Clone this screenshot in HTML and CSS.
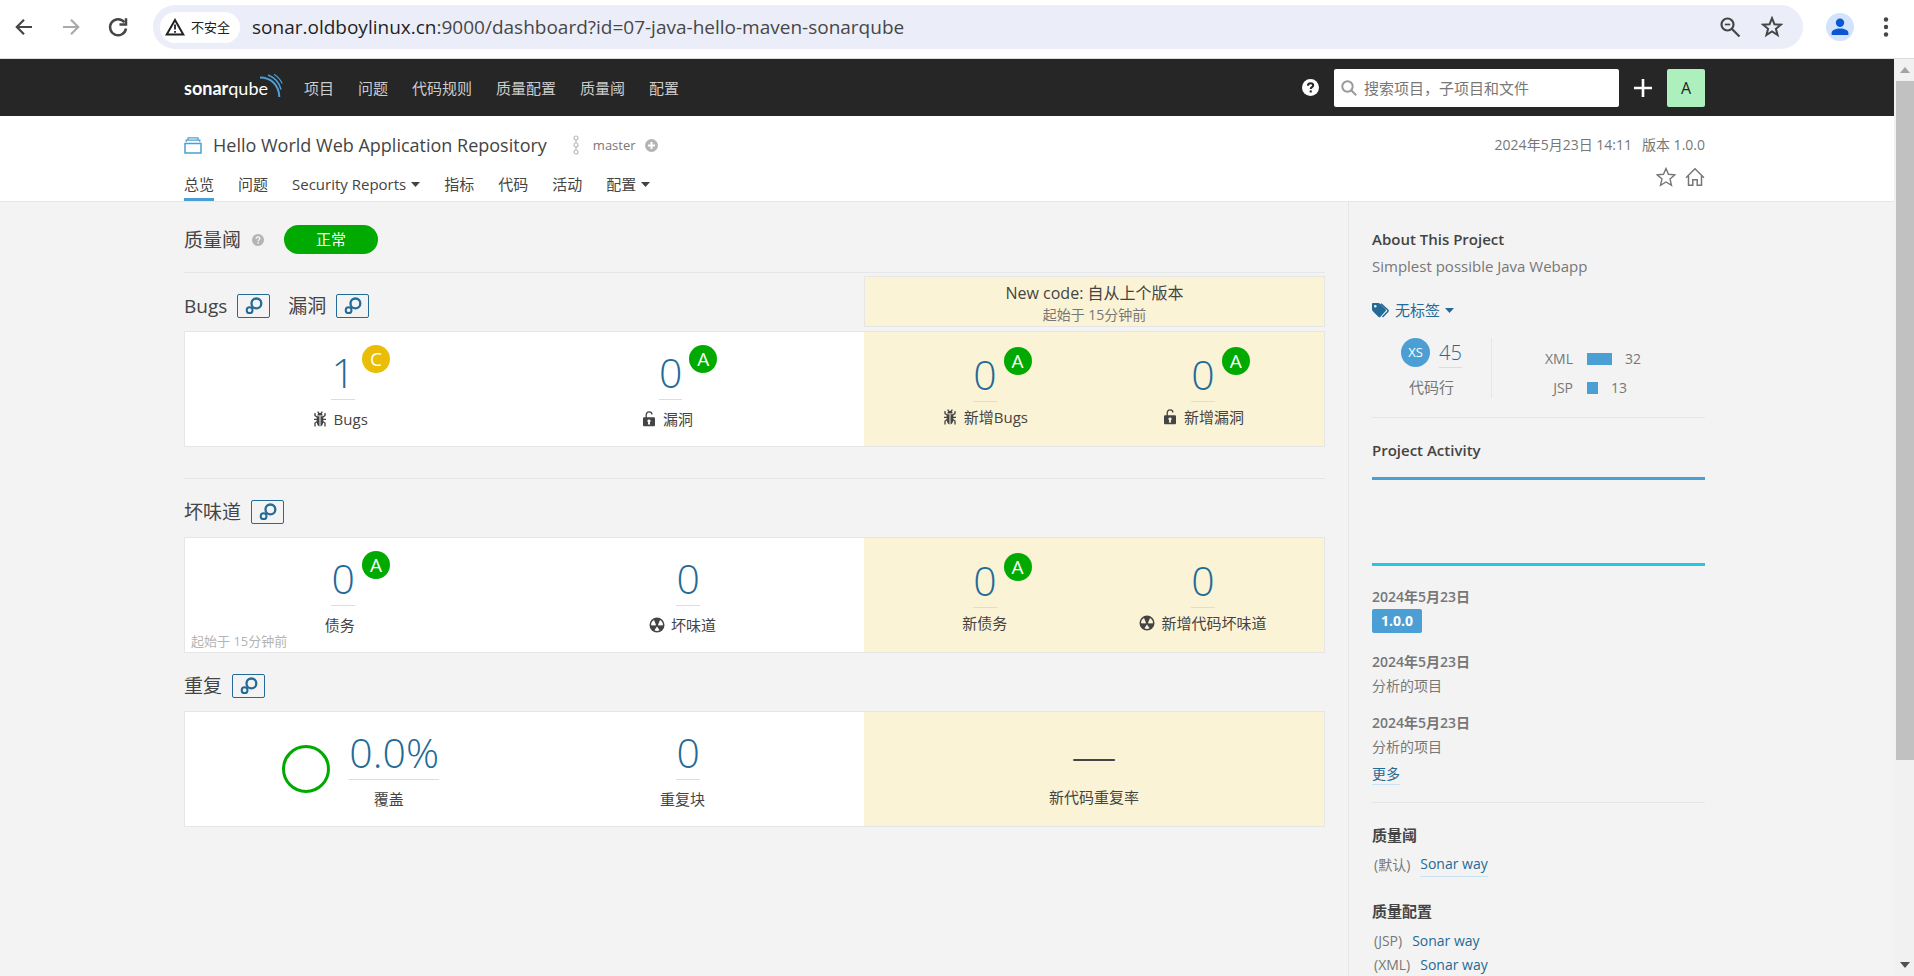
FILE: index.html
```html
<!DOCTYPE html>
<html lang="zh-CN">
<head>
<meta charset="utf-8">
<title>Hello World Web Application Repository</title>
<link rel="stylesheet" href="styles.css">
</head>
<body>
<svg class="sprite" aria-hidden="true">
  <symbol id="i-link" viewBox="0 0 18 18"><g fill="none" stroke="currentColor"><circle cx="11.4" cy="6.4" r="4.900" stroke-width="2.300"/><circle cx="4.600" cy="13.200" r="2.900" stroke-width="2"/></g></symbol>
  <symbol id="i-bug" viewBox="0 0 16 16"><g fill="none" stroke="currentColor" stroke-width="1.300"><path d="M5.700.5 6.900 2.600M10.300.5 9.100 2.600M3 2V4.600L5.200 6M13 2V4.600L10.800 6M2 8.300H5M14 8.300H11M5.200 10.500 3 12v3.400M10.800 10.500 13 12v3.400"/></g><path fill="currentColor" d="M5.400 4.600C5.400 2.800 6.400 1.800 8 1.800s2.600 1 2.600 2.800zM4.700 5.200h2.800v10.200C5.400 15.200 4.700 12.600 4.700 10zM8.500 5.200h2.800V10c0 2.600-.7 5.200-2.800 5.400z"/></symbol>
  <symbol id="i-lock" viewBox="0 0 16 16"><path d="M5.200 7V4C5.200 2 6.400.9 8 .9s2.900 1 2.900 2.500" fill="none" stroke="currentColor" stroke-width="1.300"/><path fill="currentColor" fill-rule="evenodd" d="M3.300 6.200h9.400c.8 0 1.300.5 1.300 1.300V14c0 .8-.5 1.300-1.300 1.300H3.300C2.500 15.300 2 14.800 2 14V7.500c0-.8.5-1.300 1.300-1.300zM8 8.400a1.600 1.600 0 0 0-.8 3L6.800 13.400h2.400l-.4-2A1.600 1.600 0 0 0 8 8.400z"/></symbol>
  <symbol id="i-smell" viewBox="0 0 16 16"><circle cx="8" cy="8" r="7.500" fill="currentColor"/><g fill="var(--hole)"><path d="M6.900 7.400 5 3A6 6 0 0 0 2 8.200l4.500.2zM9.100 7.400 11 3a6 6 0 0 1 3 5.200l-4.500.2zM8 9.600 5.400 13.300a6 6 0 0 0 5.200 0z"/></g></symbol>
  <symbol id="i-help" viewBox="0 0 16 16"><circle cx="8" cy="8" r="8" fill="currentColor"/><path d="M5.600 6.300C5.600 4.700 6.600 3.900 8 3.900s2.500.8 2.500 2.100C10.500 7.700 8.200 7.700 8.200 9.500" fill="none" stroke="var(--cut)" stroke-width="1.900"/><rect x="7.200" y="10.700" width="2" height="2" fill="var(--cut)"/></symbol>
  <symbol id="i-caret" viewBox="0 0 9 5"><path d="M0 0h9L4.500 5z" fill="currentColor"/></symbol>
</svg>

<header class="toolbar">
  <button class="tool" aria-label="后退"><svg width="24" height="24" viewBox="0 0 24 24" fill="none" stroke="#444746" stroke-width="2.200"><path d="M20 12H5M12 4.800 4.800 12l7.200 7.200"/></svg></button>
  <button class="tool" aria-label="前进"><svg width="24" height="24" viewBox="0 0 24 24" fill="none" stroke="#a8aaac" stroke-width="2.200"><path d="M4 12h15M12 4.800 19.200 12 12 19.200"/></svg></button>
  <button class="tool" aria-label="刷新"><svg width="24" height="24" viewBox="0 0 24 24" fill="none" stroke="#444746" stroke-width="2.500"><path d="M18.400 7.300A8 8 0 1 0 20 13.500"/><path d="M20 3.300V9.500H13.500"/></svg></button>
  <div class="omnibox">
    <button class="chip"><svg width="20" height="18" viewBox="0 0 20 18"><path d="M10 2 18.300 16.500H1.700z" fill="none" stroke="#202124" stroke-width="2"/><path d="M10 6.500v5M10 13v1.800" stroke="#202124" stroke-width="1.800"/></svg>不安全</button>
    <p class="url"><span class="host">sonar.oldboylinux.cn</span>:9000/dashboard?id=07-java-hello-maven-sonarqube</p>
    <button class="tool" aria-label="缩放"><svg width="22" height="22" viewBox="0 0 22 22" fill="none" stroke="#444746" stroke-width="2.200"><circle cx="8.500" cy="8.500" r="6"/><path d="m13 13 7.500 7.500"/><path d="M5.800 8.500h5.400" stroke-width="1.700"/></svg></button>
    <button class="tool" aria-label="为此页添加书签"><svg width="22" height="22" viewBox="0 0 22 22" fill="none" stroke="#444746" stroke-width="2"><path d="m11 2.200 2.400 6 6.500.5-5 4.100 1.700 6.200L11 15.500 5.400 19l1.700-6.200-5-4.100 6.500-.5z"/></svg></button>
  </div>
  <button class="tool" aria-label="个人资料"><svg width="28" height="28" viewBox="0 0 28 28"><circle cx="14" cy="14" r="14" fill="#d3e3fd"/><circle cx="14" cy="9.700" r="4.200" fill="#0b57d0"/><path d="M5.600 22v-2c0-3 4-4.600 8.400-4.600s8.400 1.600 8.400 4.600v2z" fill="#0b57d0"/></svg></button>
  <button class="tool menu" aria-label="菜单"><svg width="6" height="22" viewBox="0 0 6 22" fill="#444746"><circle cx="3" cy="3.500" r="2.200"/><circle cx="3" cy="11" r="2.200"/><circle cx="3" cy="18.500" r="2.200"/></svg></button>
</header>

<div class="viewport">
<div class="page">
  <nav class="global">
    <a class="logo" href="#" aria-label="sonarqube"><span class="word"><b>sonar</b>qube</span><svg width="24" height="26" viewBox="0 0 24 26" fill="none" stroke="#4b9fd5"><path d="M1 4.500C12 4.500 20 12 20.300 24" stroke-width="2"/><path d="M9 2C15.500 4.500 20.500 10 22 16.500" stroke-width="1.500"/><path d="M15 1.200C18.500 3.500 21.500 6.500 23.200 10.500" stroke-width="1.100"/></svg></a>
    <a href="#">项目</a><a href="#">问题</a><a href="#">代码规则</a><a href="#">质量配置</a><a href="#">质量阈</a><a href="#">配置</a>
    <div class="global-right">
      <button class="plain on-dark" aria-label="帮助"><svg width="17" height="17"><use href="#i-help"/></svg></button>
      <label class="search"><svg width="16" height="16" viewBox="0 0 16 16" fill="none" stroke="#999" stroke-width="2"><circle cx="6.500" cy="6.500" r="5.200"/><path d="m10.200 10.200 5 5"/></svg><input type="text" placeholder="搜索项目，子项目和文件" aria-label="搜索"></label>
      <button class="plain" aria-label="新建"><svg width="18" height="18" viewBox="0 0 18 18"><path d="M9 0v18M0 9h18" stroke="#fff" stroke-width="2.600"/></svg></button>
      <button class="avatar">A</button>
    </div>
  </nav>

  <header class="project">
    <div class="project-top">
      <svg class="project-icon" width="18" height="17" viewBox="0 0 18 17" fill="none" stroke="#4b9fd5"><rect x="1" y="6.500" width="16" height="9.500" stroke-width="1.500"/><path d="M2.200 5V3.200h13.600V5M4 3V.9h10V3" stroke-width="1.200"/></svg>
      <h1>Hello World Web Application Repository</h1>
      <svg class="branch-icon" width="6" height="20" viewBox="0 0 6 20" fill="none" stroke="#bbb" stroke-width="1.200"><circle cx="3" cy="3" r="2"/><circle cx="3" cy="10" r="2"/><circle cx="3" cy="17" r="2"/><path d="M3 5v3M3 12v3"/></svg>
      <span class="branch">master</span>
      <button class="plain" aria-label="添加分支"><svg width="13" height="13" viewBox="0 0 13 13"><circle cx="6.500" cy="6.500" r="6.500" fill="#b4b4b4"/><path d="M6.500 3v7M3 6.500h7" stroke="#fff" stroke-width="2"/></svg></button>
      <p class="meta"><time>2024年5月23日 14:11</time><span>版本 1.0.0</span></p>
    </div>
    <div class="project-bottom">
      <nav class="tabs"><a class="active" href="#">总览</a><a href="#">问题</a><a href="#">Security Reports<svg width="9" height="5"><use href="#i-caret"/></svg></a><a href="#">指标</a><a href="#">代码</a><a href="#">活动</a><a href="#">配置<svg width="9" height="5"><use href="#i-caret"/></svg></a></nav>
      <div class="marks">
        <button class="plain" aria-label="收藏"><svg width="20" height="20" viewBox="0 0 20 20" fill="none" stroke="#777" stroke-width="1.400"><path d="m10 1.500 2.500 5.800 6.300.6-4.800 4.100 1.500 6.300-5.500-3.300-5.500 3.300L6 12 1.200 7.900l6.300-.6z"/></svg></button>
        <button class="plain" aria-label="设为首页"><svg width="20" height="20" viewBox="0 0 20 20" fill="none" stroke="#777" stroke-width="1.500"><path d="M1 10.700 10 1.700l9 9M3.500 9v9.300h4.300v-5.500h4.400v5.500h4.300V9"/></svg></button>
      </div>
    </div>
  </header>

  <div class="content">
    <main>
      <div class="gate"><h2>质量阈</h2><svg class="hint" width="12" height="12"><use href="#i-help"/></svg><span class="level">正常</span></div>

      <section>
        <div class="head split">
          <div class="titles"><h2>Bugs</h2><button class="jump" aria-label="Bugs"><svg width="18" height="18"><use href="#i-link"/></svg></button><h2 class="next">漏洞</h2><button class="jump" aria-label="漏洞"><svg width="18" height="18"><use href="#i-link"/></svg></button></div>
          <div class="leak-head"><p>New code: 自从上个版本</p><small>起始于 15分钟前</small></div>
        </div>
        <div class="card split">
          <div class="overall">
            <div class="measure rated"><div class="value"><a href="#">1</a><span class="rating c">C</span></div><p class="label"><svg width="16" height="16"><use href="#i-bug"/></svg>Bugs</p></div>
            <div class="measure rated"><div class="value"><a href="#">0</a><span class="rating">A</span></div><p class="label"><svg width="16" height="16"><use href="#i-lock"/></svg>漏洞</p></div>
          </div>
          <div class="leak">
            <div class="measure"><div class="value"><a href="#">0</a><span class="rating">A</span></div><p class="label"><svg width="16" height="16"><use href="#i-bug"/></svg>新增Bugs</p></div>
            <div class="measure"><div class="value"><a href="#">0</a><span class="rating">A</span></div><p class="label"><svg width="16" height="16"><use href="#i-lock"/></svg>新增漏洞</p></div>
          </div>
        </div>
      </section>

      <section class="ruled">
        <div class="head titles"><h2>坏味道</h2><button class="jump" aria-label="坏味道"><svg width="18" height="18"><use href="#i-link"/></svg></button></div>
        <div class="card split">
          <div class="overall">
            <div class="measure rated"><div class="value"><a href="#">0</a><span class="rating">A</span></div><p class="label">债务</p></div>
            <div class="measure"><div class="value"><a href="#">0</a></div><p class="label"><svg width="16" height="16"><use href="#i-smell"/></svg>坏味道</p></div>
            <small class="since">起始于 15分钟前</small>
          </div>
          <div class="leak">
            <div class="measure"><div class="value"><a href="#">0</a><span class="rating">A</span></div><p class="label">新债务</p></div>
            <div class="measure"><div class="value"><a href="#">0</a></div><p class="label"><svg width="16" height="16"><use href="#i-smell"/></svg>新增代码坏味道</p></div>
          </div>
        </div>
      </section>

      <section class="follow">
        <div class="head titles"><h2>重复</h2><button class="jump" aria-label="重复"><svg width="18" height="18"><use href="#i-link"/></svg></button></div>
        <div class="card split">
          <div class="overall">
            <div class="with-ring"><span class="ring"></span><div class="measure"><div class="value"><a href="#">0.0%</a></div><p class="label">覆盖</p></div></div>
            <div class="measure"><div class="value"><a href="#">0</a></div><p class="label">重复块</p></div>
          </div>
          <div class="leak single">
            <div class="measure"><div class="value"><span class="none">—</span></div><p class="label">新代码重复率</p></div>
          </div>
        </div>
      </section>
    </main>

    <aside>
      <section class="about">
        <h3>About This Project</h3>
        <p class="desc">Simplest possible Java Webapp</p>
        <button class="tags"><svg width="18" height="15" viewBox="0 0 18 15"><path fill="currentColor" fill-rule="evenodd" d="M0 1.300C0 .5.5 0 1.300 0h4.900c.7 0 1.400.3 1.900.8l5.500 5.500c.5.500.5 1.200 0 1.700l-5.300 5.900c-.5.500-1.200.5-1.700 0L.8 8.200C.3 7.700 0 7 0 6.300zM3.300 1.900a1.300 1.300 0 1 0 0 2.600 1.300 1.300 0 0 0 0-2.600z"/><path d="M9 .7 15.800 7c.5.500.5.900 0 1.400L10.500 14" fill="none" stroke="currentColor" stroke-width="1.500"/></svg>无标签<svg width="9" height="5"><use href="#i-caret"/></svg></button>
        <div class="size">
          <div class="loc"><div class="loc-value"><span class="size-rating">XS</span><a href="#">45</a></div><p>代码行</p></div>
          <dl class="langs">
            <div><dt>XML</dt><dd><span class="bar" style="width:25px"></span>32</dd></div>
            <div><dt>JSP</dt><dd><span class="bar" style="width:11px"></span>13</dd></div>
          </dl>
        </div>
      </section>
      <section class="activity">
        <h3>Project Activity</h3>
        <div class="graph"></div>
        <ul>
          <li class="release"><time>2024年5月23日</time><span class="version">1.0.0</span></li>
          <li><time>2024年5月23日</time><p>分析的项目</p></li>
          <li><time>2024年5月23日</time><p>分析的项目</p></li>
        </ul>
        <a class="more" href="#">更多</a>
      </section>
      <section class="profiles">
        <h3>质量阈</h3>
        <p class="single-profile"><span>(默认)</span><a class="lined" href="#">Sonar way</a></p>
        <h3>质量配置</h3>
        <p><span>(JSP)</span><a href="#">Sonar way</a></p>
        <p><span>(XML)</span><a href="#">Sonar way</a></p>
      </section>
    </aside>
  </div>
</div>
<div class="scrollbar" aria-hidden="true">
  <svg width="10" height="6" viewBox="0 0 10 6"><path d="M0 6h10L5 0z" fill="#a3a3a3"/></svg>
  <div class="thumb"></div>
  <svg width="10" height="6" viewBox="0 0 10 6"><path d="M0 0h10L5 6z" fill="#505050"/></svg>
</div>
</div>
</body>
</html>
```
FILE: styles.css
```css
:root {
  --blue: #4b9fd5;
  --link: #236a97;
  --line: #e6e6e6;
  --text: #444;
  --muted: #777;
  --cut: #f3f3f3;
  --hole: #fff;
}

* { box-sizing: border-box; }
h1, h2, h3, p, ul, dl, dd { margin: 0; padding: 0; font-weight: 400; }
ul { list-style: none; }
a { color: inherit; text-decoration: none; }
svg { flex: none; display: block; }
.sprite { position: absolute; width: 0; height: 0; }

body {
  margin: 0;
  height: 100vh;
  overflow: hidden;
  display: flex;
  flex-direction: column;
  color: var(--text);
  background: #f3f3f3;
  font: 15px/24px "Open Sans", "Noto Sans CJK SC", sans-serif;
}

button {
  border: 0;
  padding: 0;
  margin: 0;
  background: none;
  color: inherit;
  font: inherit;
  cursor: pointer;
}
.plain, .tool { display: flex; }

/* browser toolbar */
.toolbar {
  flex: none;
  display: flex;
  align-items: center;
  gap: 23px;
  padding: 5px 25px 9px 12px;
  background: #fff;
  border-bottom: 1px solid #dcdcdc;
}
.omnibox {
  flex: 1;
  display: flex;
  align-items: center;
  gap: 20px;
  height: 44px;
  padding: 0 20px 0 7px;
  border-radius: 22px;
  background: #ebeef8;
}
.chip {
  display: flex;
  align-items: center;
  gap: 6px;
  height: 31px;
  padding: 0 10px 0 5px;
  border-radius: 16px;
  background: #fff;
  color: #202124;
  font-size: 13px;
}
.url {
  flex: 1;
  margin-left: -8px;
  color: #474747;
  font-size: 19px;
}
.host { color: #1f1f1f; }
.menu { margin-left: 6px; }

/* page frame */
.viewport { flex: 1; display: flex; min-height: 0; }
.page { flex: 1; display: flex; flex-direction: column; overflow: hidden; }
.scrollbar {
  flex: none;
  width: 20px;
  display: flex;
  flex-direction: column;
  align-items: center;
  padding: 8px 0 8px 2px;
  gap: 8px;
  background: #f1f1f1;
}
.thumb { width: 18px; height: 679px; flex: none; background: #c1c1c1; }
.scrollbar svg:last-child { margin-top: auto; }

/* global navigation */
.global, .project { padding: 0 189px 0 184px; }
.global {
  flex: none;
  display: flex;
  align-items: center;
  gap: 24px;
  height: 57px;
  background: #262626;
  color: #ccc;
}
.logo { display: flex; margin-right: -3px; color: #fff; }
.word { font: 18px/30px Lato, sans-serif; }
.logo svg { margin-left: -9px; }
.global-right { display: flex; align-items: center; gap: 15px; margin-left: auto; }
.on-dark { color: #fff; --cut: #262626; }
.search {
  display: flex;
  align-items: center;
  gap: 7px;
  width: 285px;
  height: 38px;
  padding: 0 7px;
  border-radius: 2px;
  background: #fff;
}
.search input {
  flex: 1;
  min-width: 0;
  border: 0;
  padding: 0;
  outline: 0;
  background: none;
  font: inherit;
}
.search input::placeholder { color: #777; opacity: 1; }
.avatar {
  width: 38px;
  height: 38px;
  border-radius: 2px;
  background: #adf0bd;
  color: #222;
  font-size: 16px;
}

/* project header */
.project { flex: none; background: #fff; border-bottom: 1px solid var(--line); }
.project-top { display: flex; align-items: center; padding-top: 14px; height: 44px; }
.project-icon { margin-right: 11px; }
h1 { font-size: 18px; }
.branch-icon { margin: 0 14px 0 26px; }
.branch { margin-right: 9px; color: var(--muted); font-size: 13px; }
.meta { display: flex; gap: 10px; margin-left: auto; color: var(--muted); font-size: 14px; }
.project-bottom { display: flex; justify-content: space-between; height: 41px; }
.tabs { display: flex; gap: 24px; font-size: 15px; line-height: 24px; padding-top: 12px; }
.tabs a { display: flex; align-items: center; gap: 5px; height: 29px; padding-bottom: 5px; }
.tabs .active { border-bottom: 3px solid var(--blue); padding-bottom: 2px; }
.marks { display: flex; gap: 9px; padding-top: 7px; }

/* content columns */
.content { flex: 1; display: flex; min-height: 0; padding: 0 189px 0 184px; }
main { flex: 1; padding: 23px 23px 0 0; }
aside { width: 357px; padding: 25px 0 0 23px; border-left: 1px solid var(--line); }

h2 { font-size: 19px; }
.gate {
  display: flex;
  align-items: center;
  padding-bottom: 18px;
  border-bottom: 1px solid var(--line);
}
.hint { margin: 0 20px 0 11px; color: #b4b4b4; }
.level {
  padding: 0 32px;
  border-radius: 15px;
  background: #0a0;
  color: #fff;
  line-height: 29px;
}

.titles { display: flex; align-items: center; height: 24px; }
.titles h2 { font-size: 19px; }
.titles .next { margin-left: 18px; }
.jump {
  display: flex;
  align-items: center;
  justify-content: center;
  width: 33px;
  height: 24px;
  margin-left: 10px;
  border: 1px solid var(--link);
  border-radius: 2px;
  color: var(--link);
}
.split { display: grid; grid-template-columns: minmax(0, 680fr) minmax(0, 461fr); }
.head { margin-bottom: 13px; }
.head.split { margin: 3px 0 4px; }
.head.split .titles { align-self: end; margin-bottom: 9px; }
.leak-head {
  padding: 4px 0 2px;
  border: 1px solid var(--line);
  background: #fbf3d5;
  text-align: center;
}
.leak-head p { font-size: 16px; line-height: 24px; }
.leak-head small { display: block; color: var(--muted); font-size: 14px; line-height: 19px; }
.ruled { margin-top: 31px; padding-top: 21px; border-top: 1px solid var(--line); }
.follow { margin-top: 21px; }

/* measure cards */
.card { min-height: 116px; border: 1px solid var(--line); background: #fff; }
.overall, .leak {
  display: grid;
  grid-template-columns: 1fr 1fr;
  align-items: center;
  padding: 0 12px;
}
.overall { position: relative; }
.leak { --hole: #fbf3d5; background: #fbf3d5; }
.leak.single { grid-template-columns: 1fr; }
.measure { padding-bottom: 2px; }
.value { display: flex; justify-content: center; align-items: flex-start; gap: 7px; }
.value a { font-size: 41px; line-height: 54px; font-weight: 300; }
.value a { color: var(--link); border-bottom: 1px solid #cae3f2; }
.none { font-size: 45px; line-height: 54px; font-weight: 300; }
.rating {
  width: 28px;
  height: 28px;
  border-radius: 50%;
  background: #0a0;
  color: #fff;
  font-size: 19px;
  line-height: 28px;
  text-align: center;
}
.rating.c { background: #eabe06; }
.leak .rating { margin-right: -35px; }
.label { display: flex; justify-content: center; align-items: center; gap: 6px; }
.overall .label { margin-top: 7px; padding-right: 11px; }
.overall .rated .label { padding-right: 42px; }
.leak .label { margin-top: 3px; }
.since { position: absolute; left: 6px; bottom: 1px; color: #b4b4b4; font-size: 13px; line-height: 20px; }
.with-ring { display: flex; justify-content: center; align-items: center; gap: 19px; }
.ring { width: 48px; height: 48px; border: 3px solid #0a0; border-radius: 50%; }

/* sidebar */
h3 { font-size: 15px; font-weight: 600; }
.desc { margin-top: 3px; color: var(--muted); }
.tags { display: flex; align-items: center; gap: 5px; margin-top: 20px; color: var(--link); }
.about, .activity { border-bottom: 1px solid var(--line); }
.about { padding-bottom: 12px; }
.size { display: flex; margin-top: 16px; color: var(--muted); }
.loc { width: 120px; height: 60px; border-right: 1px solid var(--line); text-align: center; }
.loc-value { display: flex; justify-content: center; gap: 9px; }
.size-rating {
  width: 29px;
  height: 29px;
  border-radius: 50%;
  background: var(--blue);
  color: #fff;
  font-size: 13px;
  line-height: 29px;
}
.loc a { color: var(--link); font-size: 20px; font-weight: 300; line-height: 29px; border-bottom: 1px solid #cae3f2; }
.loc p { margin-top: 7px; }
.langs { flex: 1; padding-top: 9px; font-size: 14px; }
.langs div { display: flex; gap: 14px; margin-bottom: 5px; }
.langs dt { width: 81px; text-align: right; }
.langs dd { display: flex; align-items: center; gap: 13px; }
.bar { height: 12px; background: var(--blue); }

.activity { padding: 20px 0 14px; font-size: 14px; color: var(--muted); }
.activity h3 { color: var(--text); }
.graph {
  height: 89px;
  margin: 15px 0 19px;
  border-top: 3px solid var(--blue);
  border-bottom: 3px solid #24c6e0;
}
.activity li { margin-bottom: 13px; }
.activity .release { margin-bottom: 17px; }
.activity time { display: block; font-weight: 600; }
.version {
  display: inline-block;
  padding: 0 9px;
  border-radius: 2px;
  background: var(--blue);
  color: #fff;
  font-weight: 700;
  vertical-align: top;
}
.activity li:last-child { margin-bottom: 5px; }
.more { display: inline-block; line-height: 20px; color: var(--link); border-bottom: 1px solid #cae3f2; vertical-align: top; }

.profiles { padding-top: 20px; }
.profiles p { display: flex; gap: 10px; padding-left: 2px; color: var(--muted); font-size: 14px; }
.profiles h3 { margin-bottom: 6px; }
.profiles .single-profile { margin-bottom: 22px; }
.profiles a { color: var(--link); }
.profiles .lined { line-height: 22px; border-bottom: 1px solid #cae3f2; }
```
